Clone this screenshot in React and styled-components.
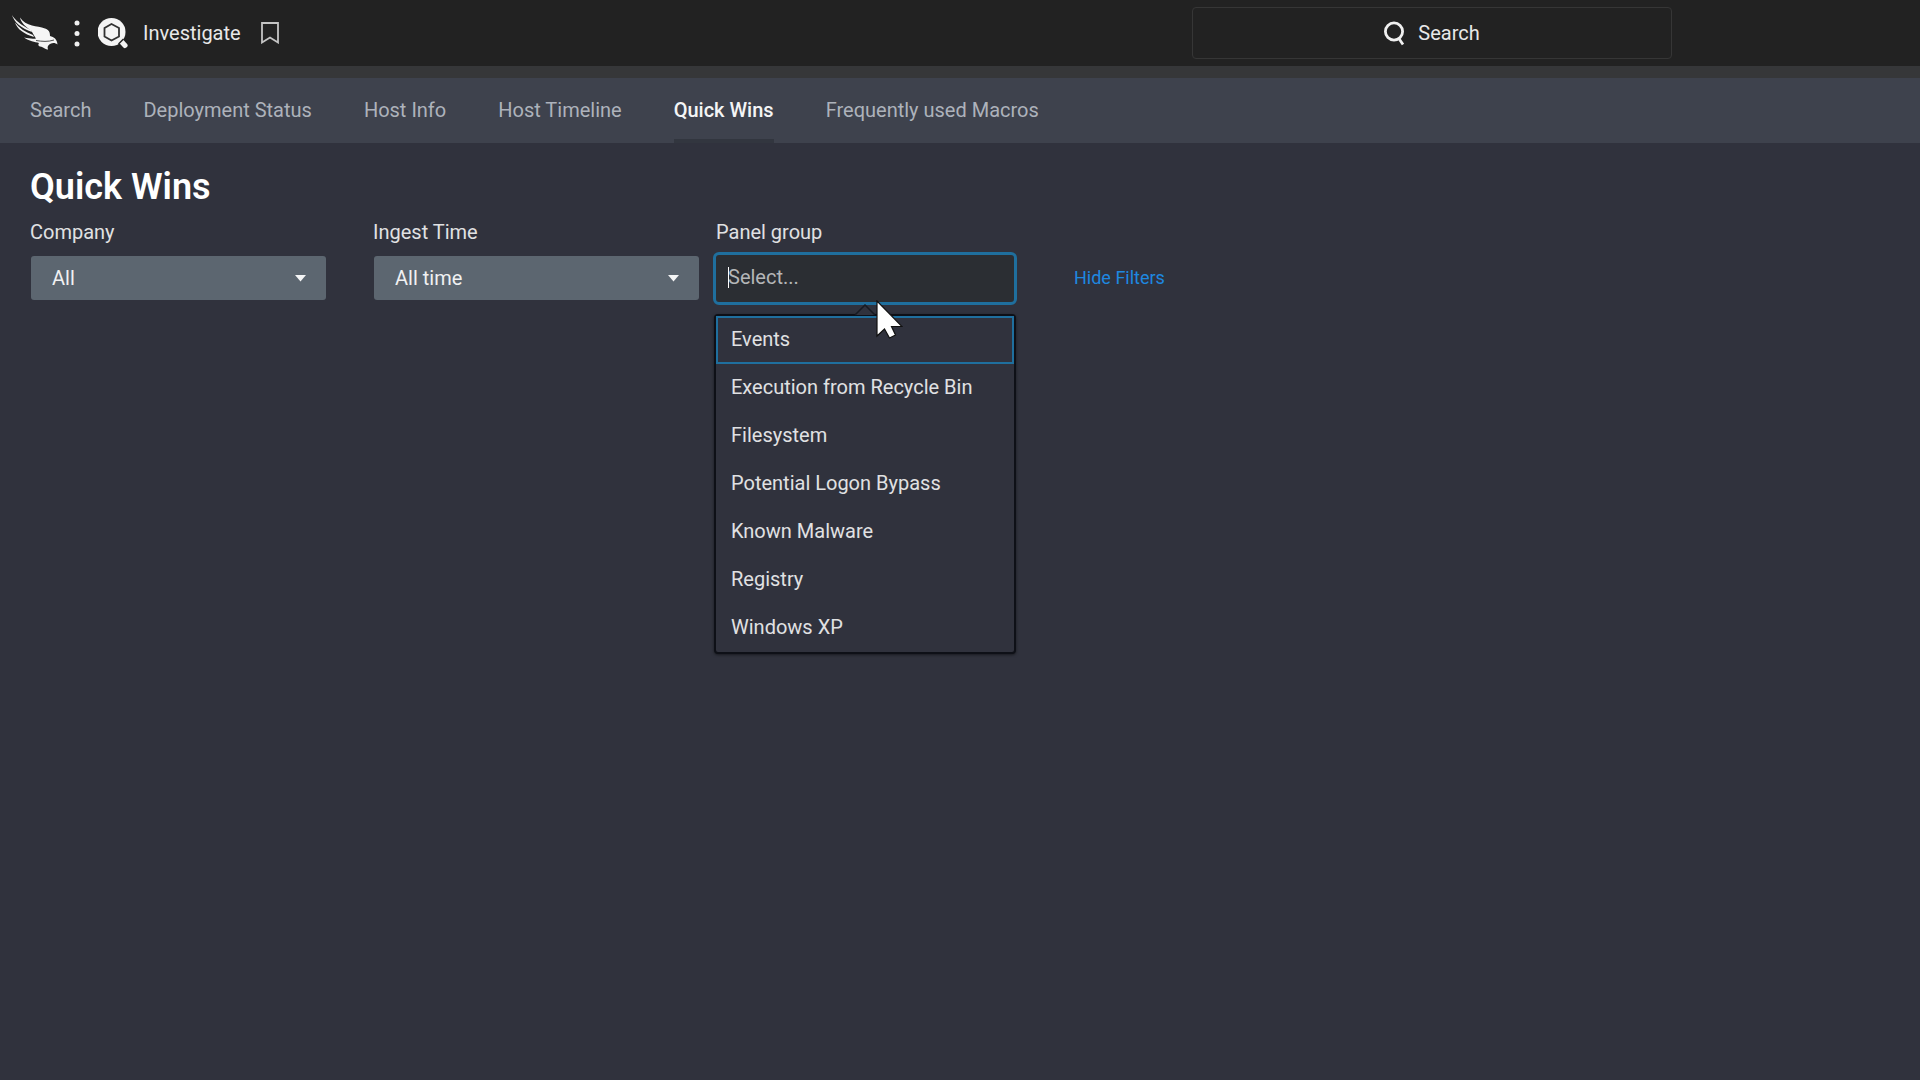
import React, { useState } from 'react';
import styled, { createGlobalStyle } from 'styled-components';

const GlobalStyle = createGlobalStyle`
    * {
        box-sizing: border-box;
    }
    body {
        margin: 0;
        min-height: 100vh;
        background: #30323d;
        color: #e0e1e3;
        font-family: Roboto, "Liberation Sans", sans-serif;
        font-size: 20px;
        font-weight: 450;
        line-height: 24px;
    }
`

const TopBar = styled.header`
    height: 66px;
    padding: 0 248px 0 12px;
    display: flex;
    align-items: center;
    justify-content: space-between;
    background: #222222;
`

const Brand = styled.div`
    display: flex;
    align-items: center;
`

const IconButton = styled.button`
    display: flex;
    margin: 0 ${props => props.$right || 0}px 0 0;
    padding: 0;
    border: none;
    background: none;
    cursor: pointer;
`

const AppName = styled.span`
    margin-right: 20px;
    color: #e8e8e8;
`

const SearchButton = styled.button`
    width: 25vw;
    height: 52px;
    display: flex;
    align-items: center;
    justify-content: center;
    gap: 12px;
    border: 1px solid #363636;
    border-radius: 4px;
    background: #222222;
    color: #e8e8e8;
    font: inherit;
    cursor: pointer;
`

const Strip = styled.div`
    height: 12px;
    background: #363739;
`

const Nav = styled.nav`
    height: 65px;
    padding: 0 30px;
    display: flex;
    gap: 52px;
    background: #3e424d;
`

const NavLink = styled.a`
    display: flex;
    align-items: center;
    padding-bottom: 2px;
    border-top: 4px solid transparent;
    border-bottom: 4px solid ${props => props.$active ? '#32363f' : 'transparent'};
    color: ${props => props.$active ? '#f4f5f6' : '#adb2bb'};
    font-weight: ${props => props.$active ? 500 : 400};
    text-decoration: none;
`

const Main = styled.main`
    padding: 23px 30px;
`

const Title = styled.h1`
    margin: 0 0 12px;
    color: #ffffff;
    font-size: 36px;
    font-weight: 600;
    line-height: 42px;
`

const Filters = styled.div`
    display: flex;
    align-items: flex-start;
`

const Field = styled.div`
    width: ${props => props.$width}px;
    margin-right: ${props => props.$right}px;
    display: flex;
    flex-direction: column;
    gap: 12px;
`

const SelectBox = styled.div`
    margin-left: 1px;
    display: grid;
    align-items: center;
    & > * {
        grid-area: 1 / 1;
    }
    svg {
        justify-self: end;
        margin-right: 20px;
        pointer-events: none;
    }
`

const StyledSelect = styled.select`
    width: 100%;
    height: 44px;
    padding: 0 21px;
    appearance: none;
    border: none;
    border-radius: 3px;
    background: #5c6670;
    color: #f0f1f2;
    font: inherit;
    outline: none;
`

const Combo = styled.div`
    position: relative;
    margin: -4px 0 0 -3px;
`

const ComboInput = styled.input`
    display: block;
    width: 100%;
    height: 53px;
    padding: 0 12px 4px;
    border: 3px solid #1f6f9e;
    border-radius: 6px;
    background: #2b2e33;
    color: #e6e7e9;
    font: inherit;
    outline: none;
    caret-color: transparent;
    &::placeholder {
        color: #b4b6b8;
        opacity: 1;
    }
`

const Caret = styled.span`
    position: absolute;
    top: 15px;
    left: 15px;
    width: 1px;
    height: 21px;
    background: #ffffff;
`

const Menu = styled.ul`
    position: absolute;
    top: 62px;
    left: 1px;
    right: 1px;
    margin: 0;
    padding: 0;
    list-style: none;
    border: 2px solid #0e1017;
    border-radius: 4px;
    background: #30323d;
    box-shadow: 0 1px 3px rgba(0, 0, 0, 0.5);
`

const Notch = styled.svg`
    position: absolute;
    top: 52px;
    left: 141px;
`

const Option = styled.li`
    height: 48px;
    padding: 0 13px 2px;
    display: flex;
    align-items: center;
    border: 2px solid ${props => props.$active ? '#1f6f9e' : 'transparent'};
    cursor: pointer;
`

const Pointer = styled.svg`
    position: absolute;
    top: 48px;
    left: 163px;
    pointer-events: none;
`

const HideLink = styled.a`
    margin-top: 46px;
    color: #1e88e0;
    font-size: 18px;
    font-weight: 400;
    text-decoration: none;
`

const tabs = ['Search', 'Deployment Status', 'Host Info', 'Host Timeline', 'Quick Wins', 'Frequently used Macros'];

const groups = [
    'Events',
    'Execution from Recycle Bin',
    'Filesystem',
    'Potential Logon Bypass',
    'Known Malware',
    'Registry',
    'Windows XP',
];

const Falcon = () => (
    <svg width="46" height="36" viewBox="0 0 46 36" fill="#f5f5f5">
        <path d="M0 0C3 5 9 10 19 15L20 17C9 13 2 7 0 0Z" />
        <path d="M8 2.500C11 7 15 9 20 10.500C24 11.500 29 12 33 13.500C37 15 38 17 38 21C42 22 45 24 45.500 29.500C43 27.500 41 27.500 38 29C36 30 35 32 36 34.500C33 34.500 32 32 28 31.500C26 31 26 29 27 28C23 27 17 26 12 22.500C17 23.500 20 24 24 23.500C22 21 21 18 19 15.500C14 12 9 8 8 2.500Z" />
        <path d="M3 7.500C7 13 13 17 21 20L22 22C12 19 5 14 3 7.500Z" />
        <path d="M24 25.500C30 26.500 36 27 42 25" fill="none" stroke="#222222" strokeWidth="0.8" />
    </svg>
)

const Dots = () => (
    <svg width="6" height="28" viewBox="0 0 6 28" fill="#f0f0f0">
        <circle cx="3" cy="4" r="2.5" />
        <circle cx="3" cy="14.500" r="2.5" />
        <circle cx="3" cy="25" r="2.5" />
    </svg>
)

const InvestigateLogo = () => (
    <svg width="31" height="31" viewBox="0 0 31 31">
        <path d="M22 22L27 27.500" stroke="#f5f5f5" strokeWidth="5" strokeLinecap="round" />
        <circle cx="13.500" cy="14" r="14" fill="#f5f5f5" />
        <path d="M13.500 6L21 10V18.500L13.500 22.500L6.500 18.500V10Z" fill="none" stroke="#333" strokeWidth="1.8" />
        <path d="M20.500 26L25.500 21" stroke="#222" strokeWidth="1.5" />
    </svg>
)

const Bookmark = () => (
    <svg width="18" height="22" viewBox="0 0 18 22" fill="none" stroke="#c4c4c4" strokeWidth="1.8">
        <path d="M1 1H17V20.5L9 15.5L1 20.5Z" />
    </svg>
)

const Magnifier = () => (
    <svg width="22" height="25" viewBox="0 0 22 25" fill="none" stroke="#f0f0f0" strokeWidth="2.8">
        <circle cx="10" cy="10.5" r="8.6" />
        <path d="M14.5 17L19 23.5" />
    </svg>
)

const Arrow = () => (
    <svg width="11" height="7" viewBox="0 0 11 7" fill="#f4f5f6">
        <path d="M0 0H11L5.5 6.5Z" />
    </svg>
)

const Filter = ({id, label, value, width, right}) => (
    <Field $width={width} $right={right}>
        <label htmlFor={id}>{label}</label>
        <SelectBox>
            <StyledSelect id={id} defaultValue={value}>
                <option>{value}</option>
            </StyledSelect>
            <Arrow />
        </SelectBox>
    </Field>
)

const PanelGroup = () => {
    const [text, setText] = useState('');
    const [active, setActive] = useState(0);
    return (
        <Field $width={301} $right={57}>
            <label htmlFor="group">Panel group</label>
            <Combo>
                <ComboInput
                    id="group"
                    type="text"
                    placeholder="Select..."
                    value={text}
                    onChange={e => setText(e.target.value)}
                />
                <Caret />
                <Menu role="listbox">
                    {groups.map((name, i) => (
                        <Option key={name} role="option" aria-selected={i === active} $active={i === active} onClick={() => setActive(i)}>
                            {name}
                        </Option>
                    ))}
                </Menu>
                <Notch width="22" height="12" viewBox="0 0 22 12">
                    <path d="M1 11L11 1L21 11" fill="#30323d" stroke="#171a22" strokeWidth="1.5" />
                </Notch>
                <Pointer width="27" height="39" viewBox="0 0 27 39">
                    <path d="M1 1V36L8.500 29L13.500 38L19.500 35L15.500 26.500H26Z" fill="#ffffff" stroke="#111111" strokeWidth="1.2" />
                </Pointer>
            </Combo>
        </Field>
    )
}

const App = () => (
    <>
        <GlobalStyle />
        <TopBar>
            <Brand>
                <IconButton $right={16} aria-label="Home"><Falcon /></IconButton>
                <IconButton $right={18} aria-label="Menu"><Dots /></IconButton>
                <IconButton $right={14} aria-label="Investigate"><InvestigateLogo /></IconButton>
                <AppName>Investigate</AppName>
                <IconButton aria-label="Bookmark"><Bookmark /></IconButton>
            </Brand>
            <SearchButton type="button">
                <Magnifier />
                Search
            </SearchButton>
        </TopBar>
        <Strip />
        <Nav>
            {tabs.map(tab => (
                <NavLink key={tab} href="#" $active={tab === 'Quick Wins'}>{tab}</NavLink>
            ))}
        </Nav>
        <Main>
            <Title>Quick Wins</Title>
            <Filters>
                <Filter id="company" label="Company" value="All" width={296} right={47} />
                <Filter id="ingest" label="Ingest Time" value="All time" width={326} right={17} />
                <PanelGroup />
                <HideLink href="#">Hide Filters</HideLink>
            </Filters>
        </Main>
    </>
)

export default App;
